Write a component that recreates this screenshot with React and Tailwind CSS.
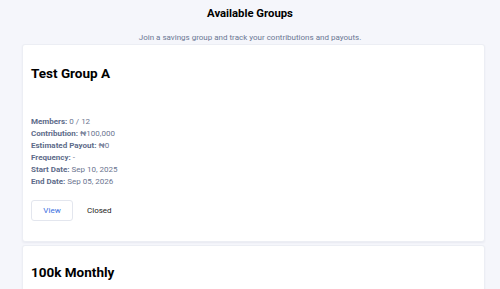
export default function App() {
  const details = [
    ["Members:", "0 / 12"],
    ["Contribution:", "₦100,000"],
    ["Estimated Payout:", "₦0"],
    ["Frequency:", "-"],
    ["Start Date:", "Sep 10, 2025"],
    ["End Date:", "Sep 05, 2026"],
  ];

  return (
    <div
      className="h-[289px] bg-[#f5f6fb] overflow-hidden"
      style={{ fontFamily: "Roboto, 'Liberation Sans', sans-serif" }}
    >
      {/* Header */}
      <h1 className="pt-[6px] text-center text-[11.3px] leading-[16px] font-bold text-black">
        Available Groups
      </h1>
      <p className="mt-[10px] text-center text-[8px] leading-[12px] text-[#6b7794]">
        Join a savings group and track your contributions and payouts.
      </p>

      {/* Group cards */}
      <div className="ml-[22px] mr-[15px] flex flex-col gap-[3px]">
        <div className="bg-white rounded-[3px] border border-[#eceef4] shadow-[0_1px_2px_rgba(30,40,80,0.06)] px-[8px] pt-[18px] pb-[20px]">
          <h2 className="text-[13.5px] leading-[20px] font-bold text-black">Test Group A</h2>
          <div className="mt-[33px] flex flex-col text-[8px] leading-[12px] text-[#6b7590]">
            {details.map(([label, value]) => (
              <p key={label}>
                <span className="font-bold text-[#5d6b89]">{label}</span> {value}
              </p>
            ))}
          </div>
          <div className="mt-[12px] flex items-center gap-[14px]">
            <button className="w-[42px] h-[21px] rounded-[3px] border border-[#e3e6ee] bg-white text-[8px] text-[#3a6fe0]">
              View
            </button>
            <span className="text-[8px] text-[#1a1a1a]">Closed</span>
          </div>
        </div>

        <div className="bg-white rounded-[3px] border border-[#eceef4] shadow-[0_1px_2px_rgba(30,40,80,0.06)] px-[8px] pt-[16px] pb-[20px]">
          <h2 className="text-[13.5px] leading-[20px] font-bold text-black">100k Monthly</h2>
        </div>
      </div>
    </div>
  );
}
